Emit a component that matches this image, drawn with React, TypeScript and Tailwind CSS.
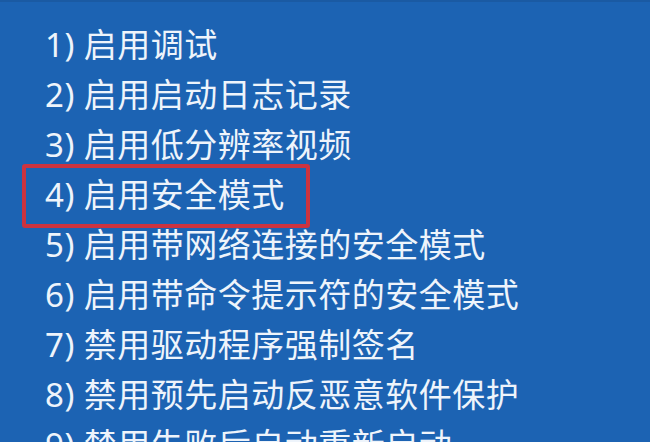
const items = [
  '1) 启用调试',
  '2) 启用启动日志记录',
  '3) 启用低分辨率视频',
  '4) 启用安全模式',
  '5) 启用带网络连接的安全模式',
  '6) 启用带命令提示符的安全模式',
  '7) 禁用驱动程序强制签名',
  '8) 禁用预先启动反恶意软件保护',
  '9) 禁用失败后自动重新启动',
]

export default function App() {
  return (
    <div
      className="h-[442px] w-[650px] overflow-hidden border-t-2 border-[#1a5aa3] bg-[#1c63b3] pl-[45px] pt-[18px] text-[33px] tracking-[0.5px] text-[#eef4fb]"
      style={{ fontFamily: '"Noto Sans", "Noto Sans CJK SC", sans-serif' }}
    >
      {items.map((label, i) => (
        <div key={label} className="relative h-[50px] whitespace-nowrap leading-[50px]">
          {i === 3 && (
            <span className="absolute left-[-23px] top-[-6px] h-[64px] w-[288px] rounded-[3px] border-4 border-[#cc3340]" />
          )}
          <span className="relative">{label}</span>
        </div>
      ))}
    </div>
  )
}
